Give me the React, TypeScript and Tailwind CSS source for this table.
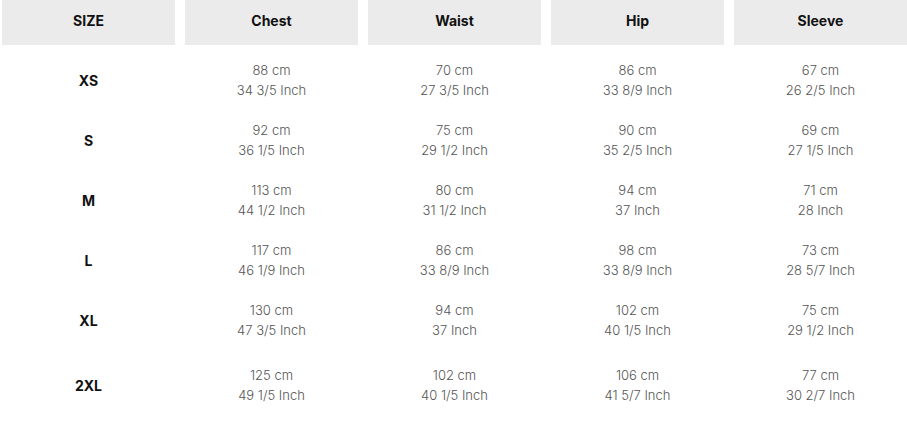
import React from "react";

const rows = [
  { size: "XS", cells: [["88 cm", "34 3/5 Inch"], ["70 cm", "27 3/5 Inch"], ["86 cm", "33 8/9 Inch"], ["67 cm", "26 2/5 Inch"]] },
  { size: "S", cells: [["92 cm", "36 1/5 Inch"], ["75 cm", "29 1/2 Inch"], ["90 cm", "35 2/5 Inch"], ["69 cm", "27 1/5 Inch"]] },
  { size: "M", cells: [["113 cm", "44 1/2 Inch"], ["80 cm", "31 1/2 Inch"], ["94 cm", "37 Inch"], ["71 cm", "28 Inch"]] },
  { size: "L", cells: [["117 cm", "46 1/9 Inch"], ["86 cm", "33 8/9 Inch"], ["98 cm", "33 8/9 Inch"], ["73 cm", "28 5/7 Inch"]] },
  { size: "XL", cells: [["130 cm", "47 3/5 Inch"], ["94 cm", "37 Inch"], ["102 cm", "40 1/5 Inch"], ["75 cm", "29 1/2 Inch"]] },
  { size: "2XL", cells: [["125 cm", "49 1/5 Inch"], ["102 cm", "40 1/5 Inch"], ["106 cm", "41 5/7 Inch"], ["77 cm", "30 2/7 Inch"]] },
];

const headers = ["SIZE", "Chest", "Waist", "Hip", "Sleeve"];

export default function App() {
  return (
    <div
      className="w-[907px] h-[423px] bg-white pl-[2px] pt-0"
      style={{ fontFamily: "Inter, 'Open Sans', sans-serif" }}
    >
      <div className="grid grid-cols-[repeat(5,173px)] gap-x-[10px]">
        {headers.map((h) => (
          <div
            key={h}
            className="h-[45px] pb-[5px] bg-[#ebebeb] flex items-center justify-center text-[14px] font-bold text-[#111]"
          >
            {h}
          </div>
        ))}
      </div>
      <div className="mt-[5px]">
        {rows.map((row, i) => (
          <div
            key={row.size}
            className={
              "grid grid-cols-[repeat(5,173px)] gap-x-[10px] h-[60px] items-center " +
              (i === rows.length - 1 ? "mt-[5px]" : "")
            }
          >
            <div className="text-center text-[14px] font-bold text-[#111]">{row.size}</div>
            {row.cells.map((c, j) => (
              <div key={j} className="text-center text-[13px] leading-[20px] text-[#555] font-light">
                <div>{c[0]}</div>
                <div>{c[1]}</div>
              </div>
            ))}
          </div>
        ))}
      </div>
    </div>
  );
}
